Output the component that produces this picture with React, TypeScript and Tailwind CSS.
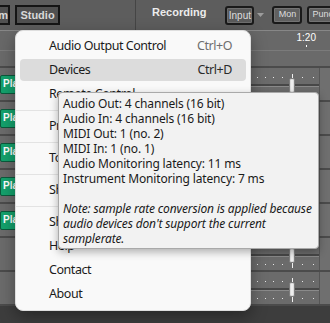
import React from 'react';

const UI = "font-['Noto_Sans',sans-serif]";
const BAR = "font-['Liberation_Sans',Arial,sans-serif]";

type Item = { label: string; shortcut?: string; active?: boolean } | 'sep';

const menuItems: Item[] = [
  { label: 'Audio Output Control', shortcut: 'Ctrl+O' },
  { label: 'Devices', shortcut: 'Ctrl+D', active: true },
  { label: 'Remote Control' },
  'sep',
  { label: 'Preferences' },
  'sep',
  { label: 'Tools' },
  'sep',
  { label: 'Show Log' },
  'sep',
  { label: 'Shortcuts' },
  { label: 'Help' },
  { label: 'Contact' },
  { label: 'About' },
];

const Fader = () => (
  <svg width="68" height="32" viewBox="0 0 68 32" className="block">
    {[6, 14, 22, 31, 51, 62].map((x) => (
      <g key={x}>
        <rect x={x} y={9} width={1} height={1} fill="#e6e6e6" />
        <rect x={x} y={26} width={1} height={1} fill="#e6e6e6" />
      </g>
    ))}
    <rect x={0} y={16} width={68} height={2} fill="#474747" />
    <rect x={0} y={18} width={68} height={1} fill="#8a8a8a" />
    <rect x={41} y={6} width={1} height={24} fill="#f0f0f0" />
    <rect x={38.5} y={10.5} width={5} height={14} rx={1.5} fill="#dcdcdc" stroke="#7d7d7d" />
    <rect x={40.5} y={12} width={1} height={11} fill="#ffffff" />
  </svg>
);

const TrackRow = ({ play }: { play: boolean }) => (
  <div className="flex h-[34px] border-t-2 border-[#4b4b4b] bg-[#6b6b6b]">
    <div className="w-[40px] shrink-0 pt-[7px]">
      {play && (
        <div className="h-[19px] w-[40px] rounded-[2px] border border-[#0b5a3c] bg-[#14a16c] pl-[2px] text-[10px] leading-[16px] font-bold text-white">
          Play
        </div>
      )}
    </div>
    <div className="flex-1" />
    <div className="w-[68px] shrink-0">
      <Fader />
    </div>
    <div className="w-[11px] shrink-0 border-l border-[#555555] bg-[#6f6f6f]" />
  </div>
);

export default function App() {
  return (
    <div className={`relative w-[330px] h-[323px] overflow-hidden bg-[#3d3d3d] ${BAR}`}>
      {/* top bar */}
      <div className="flex h-[30px] items-center bg-[#5d5d5d]">
        <div className="-ml-[4px] flex h-[20px] w-[14px] shrink-0 items-center justify-end border-2 border-[#151515] bg-[#505050] text-[11px] font-bold text-[#d8d8d8]">
          m
        </div>
        <div className="ml-[5px] flex h-[20px] w-[45px] shrink-0 items-center justify-center border-2 border-[#151515] bg-[#505050] text-[11px] font-bold text-[#d8d8d8]">
          Studio
        </div>
        <div className="ml-[75px] h-full w-px shrink-0 bg-[#454545]" />
        <div className="ml-[16px] mt-[5px] shrink-0 self-start text-[11px] leading-[14px] font-bold text-[#ececec]">
          Recording
        </div>
        <div className="ml-[19px] flex h-[19px] w-[29px] shrink-0 items-center justify-center rounded-[3px] border-2 border-[#1a1a1a] bg-[#5a5a5a] text-[10px] text-[#dddddd] shadow-[inset_0_0_0_1px_#6e6e6e]">
          Input
        </div>
        <svg width="7" height="4" viewBox="0 0 7 4" className="ml-[3px] shrink-0">
          <path d="M0 0H7L3.5 4Z" fill="#9c9c9c" />
        </svg>
        <div className="ml-[8px] flex h-[18px] w-[30px] shrink-0 items-center justify-center rounded-[3px] border-2 border-[#1a1a1a] bg-[#606060] text-[9px] text-[#dddddd] shadow-[inset_0_0_0_1px_#747474]">
          Mon
        </div>
        <div className="ml-[5px] flex h-[18px] w-[34px] shrink-0 items-center justify-start rounded-[3px] border-2 border-[#1a1a1a] bg-[#606060] pl-[3px] text-[9px] text-[#dddddd] shadow-[inset_0_0_0_1px_#747474]">
          Punch
        </div>
      </div>

      {/* ruler */}
      <div className="flex h-[20px] border-t border-[#878787] bg-[#686868]">
        <div className="flex-1" />
        <div className="mr-[14px] flex flex-col items-center">
          <span className="text-[10px] leading-[14px] text-white">1:20</span>
          <span className="h-[2px] w-px bg-white" />
        </div>
      </div>
      <div className="h-[16px] border-t border-[#7b7b7b] bg-[#6a6a6a]" />

      {/* tracks */}
      <TrackRow play />
      <TrackRow play />
      <TrackRow play />
      <TrackRow play />
      <TrackRow play />
      <TrackRow play={false} />
      <TrackRow play={false} />
      <div className="h-[2px] bg-[#4b4b4b]" />

      {/* Studio menu */}
      <div
        className={`absolute left-[15px] top-[30px] w-[236px] h-[281px] rounded-[8px] border border-[#dedede] bg-[#f9f9f9] py-[3px] shadow-[0_6px_16px_rgba(0,0,0,0.35)] ${UI}`}
      >
        {menuItems.map((it, i) =>
          it === 'sep' ? (
            <div key={i} className="flex h-[8px] items-center">
              <div className="h-px w-full bg-[#e3e3e3]" />
            </div>
          ) : (
            <div key={i} className="h-[24px] px-[4px] py-px">
              <div
                className={`flex h-full items-center justify-between rounded-[4px] pl-[29px] pr-[14px] text-[12.5px] tracking-[-0.45px] ${
                  it.active ? 'bg-[#dcdcdc]' : ''
                }`}
              >
                <span className="text-[#1b1b1b]">{it.label}</span>
                {it.shortcut && (
                  <span className={it.active ? 'text-[#2a2a2a]' : 'text-[#6e6e6e]'}>{it.shortcut}</span>
                )}
              </div>
            </div>
          )
        )}
      </div>

      {/* device tooltip */}
      <div
        className={`absolute left-[58px] top-[92px] w-[261px] h-[157px] rounded-[4px] border border-[#a9a9a9] bg-[#f2f2f2] pl-[4px] pt-[3px] text-[12px] leading-[15px] tracking-[-0.15px] whitespace-nowrap text-[#1a1a1a] shadow-[0_3px_8px_rgba(0,0,0,0.3)] ${UI}`}
      >
        <div>Audio Out: 4 channels (16 bit)</div>
        <div>Audio In: 4 channels (16 bit)</div>
        <div>MIDI Out: 1 (no. 2)</div>
        <div>MIDI In: 1 (no. 1)</div>
        <div>Audio Monitoring latency: 11 ms</div>
        <div>Instrument Monitoring latency: 7 ms</div>
        <div className="h-[15px]" />
        <div className="italic">
          Note: sample rate conversion is applied because
          <br />
          audio devices don't support the current
          <br />
          samplerate.
        </div>
      </div>
    </div>
  );
}
